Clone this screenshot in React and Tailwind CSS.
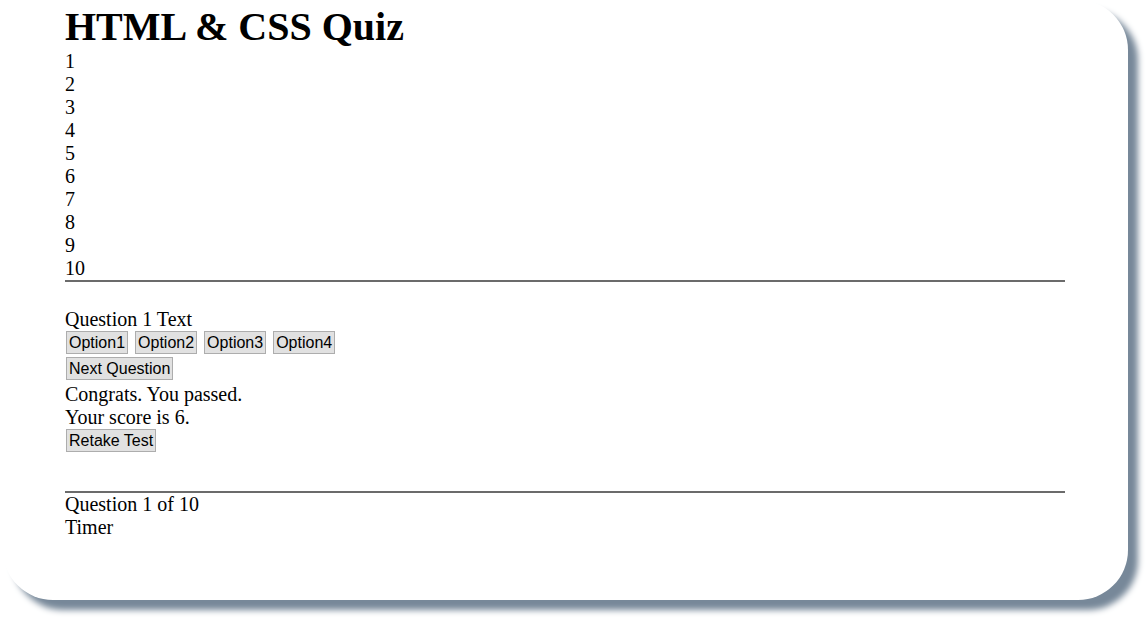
const questions = [1, 2, 3, 4, 5, 6, 7, 8, 9, 10];
const options = ['Option1', 'Option2', 'Option3', 'Option4'];

function QuizButton({ children }) {
  return (
    <button className="h-[23px] px-[2px] bg-[#e1e1e1] border border-[#adadad] text-black text-[16px] leading-[19px] font-['Liberation_Sans',Arial,sans-serif]">
      {children}
    </button>
  );
}

export default function App() {
  return (
    <div className="w-[1146px] h-[619px] bg-white pl-[3px] font-['Liberation_Serif','Times_New_Roman',serif] text-black text-[20px] leading-[23px]">
      {/* Card */}
      <div className="w-[1125px] h-[600px] bg-white rounded-[50px] shadow-[10px_10px_6px_#778899] pl-[62px] pr-[63px] pt-[4px]">
        <h1 className="text-[40px] leading-[46px] font-bold">HTML &amp; CSS Quiz</h1>

        {/* Question list */}
        <div>
          {questions.map((n) => (
            <div key={n}>{n}</div>
          ))}
        </div>
        <div className="h-[2px] bg-[#6b6b6b]" />

        {/* Question */}
        <div className="pt-[26px]">
          <div>Question 1 Text</div>
          <div className="flex gap-[7px] pl-[1px]">
            {options.map((o) => (
              <QuizButton key={o}>{o}</QuizButton>
            ))}
          </div>
          <div className="mt-[3px] flex pl-[1px]">
            <QuizButton>Next Question</QuizButton>
          </div>
          <div className="mt-[3px]">Congrats. You passed.</div>
          <div>Your score is 6.</div>
          <div className="flex pl-[1px]">
            <QuizButton>Retake Test</QuizButton>
          </div>
        </div>

        {/* Footer */}
        <div className="mt-[39px] h-[2px] bg-[#6b6b6b]" />
        <div>Question 1 of 10</div>
        <div>Timer</div>
      </div>
    </div>
  );
}
